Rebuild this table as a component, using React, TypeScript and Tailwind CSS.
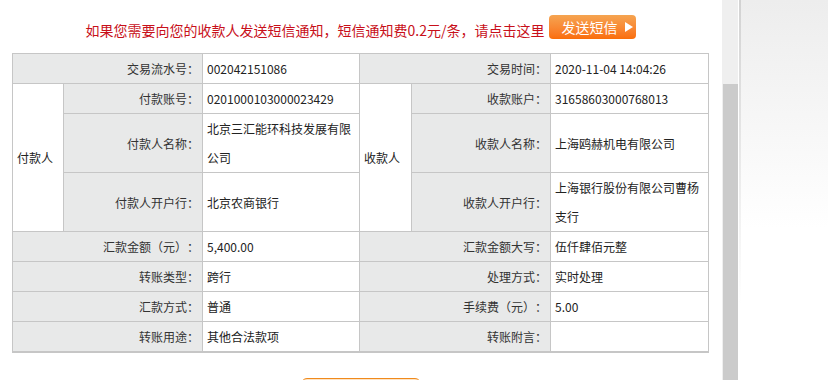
const rows = [
  { l1: "汇款金额（元）：", v1: "5,400.00", l2: "汇款金额大写：", v2: "伍仟肆佰元整" },
  { l1: "转账类型：", v1: "跨行", l2: "处理方式：", v2: "实时处理" },
  { l1: "汇款方式：", v1: "普通", l2: "手续费（元）：", v2: "5.00" },
  { l1: "转账用途：", v1: "其他合法款项", l2: "转账附言：", v2: "" },
];

const label = "border border-[#c6c6c6] bg-[#e8e9e9] text-right pr-[3px] text-[#333] align-middle";
const value = "border border-[#c6c6c6] bg-white text-left pl-[4px] pr-[2px] text-[#222] align-middle";
const side = "border border-[#c6c6c6] bg-white text-left pl-[4px] text-[#222] align-middle";

const App = () => {
  return (
    <div className="flex h-[380px] w-[828px] overflow-hidden bg-white font-['Noto_Sans_CJK_SC','Noto_Sans',sans-serif] [text-spacing-trim:space-all]">
      <div className="w-[722px] shrink-0 bg-white">
        <div className="flex h-[53px] items-start justify-center pt-[15px]">
          <span className="mt-[5px] text-[14px] leading-[20px] text-[#c8101a]">
            如果您需要向您的收款人发送短信通知，短信通知费0.2元/条，请点击这里
          </span>
          <button className="ml-[5px] flex h-[24px] w-[87px] items-center rounded-[4px] bg-linear-to-b from-[#f5a450] to-[#fa6d06] pl-[12px] text-[14px] leading-[20px] text-white">
            发送短信
            <svg width="8" height="10" viewBox="0 0 8 10" className="ml-[8px]">
              <path d="M0 0 L8 5 L0 10 Z" fill="#fff" />
            </svg>
          </button>
        </div>

        <table className="ml-[12px] w-[696px] table-fixed border-collapse border-b-2 border-b-[#c6c6c6] text-[12px] leading-[29px]">
          <colgroup>
            <col className="w-[51px]" />
            <col className="w-[139px]" />
            <col className="w-[157px]" />
            <col className="w-[52px]" />
            <col className="w-[139px]" />
            <col className="w-[158px]" />
          </colgroup>
          <tbody>
            <tr>
              <td colSpan={2} className={label}>交易流水号：</td>
              <td className={value}>002042151086</td>
              <td colSpan={2} className={label}>交易时间：</td>
              <td className={value}>2020-11-04 14:04:26</td>
            </tr>
            <tr>
              <td rowSpan={3} className={side}>付款人</td>
              <td className={label}>付款账号：</td>
              <td className={value}>0201000103000023429</td>
              <td rowSpan={3} className={side}>收款人</td>
              <td className={label}>收款账户：</td>
              <td className={value}>31658603000768013</td>
            </tr>
            <tr>
              <td className={label}>付款人名称：</td>
              <td className={value}>北京三汇能环科技发展有限公司</td>
              <td className={label}>收款人名称：</td>
              <td className={value}>上海鸥赫机电有限公司</td>
            </tr>
            <tr>
              <td className={label}>付款人开户行：</td>
              <td className={value}>北京农商银行</td>
              <td className={label}>收款人开户行：</td>
              <td className={value}>上海银行股份有限公司曹杨支行</td>
            </tr>
            {rows.map((r, idx) => (
              <tr key={idx}>
                <td colSpan={2} className={label}>{r.l1}</td>
                <td className={value}>{r.v1}</td>
                <td colSpan={2} className={label}>{r.l2}</td>
                <td className={value}>{r.v2}</td>
              </tr>
            ))}
          </tbody>
        </table>

        <div className="mt-[25px] flex justify-center">
          <div className="h-[32px] w-[120px] rounded-[6px] border border-[#f08a1c] bg-linear-to-b from-[#fde3c4] to-white" />
        </div>
      </div>

      {/* fake scrollbar */}
      <div className="flex w-[16px] shrink-0 flex-col bg-[#efefef] pl-[1px]">
        <div className="h-[84px] shrink-0" />
        <div className="flex-1 bg-[#cbcbcb]" />
      </div>
      <div className="w-[1px] shrink-0 bg-white" />
      <div className="w-[2px] shrink-0 bg-linear-to-b from-[#d2d2d2] to-white to-80%" />
      <div className="flex-1 bg-linear-to-b from-[#ededed] to-white to-60%" />
    </div>
  );
};

export default App;
